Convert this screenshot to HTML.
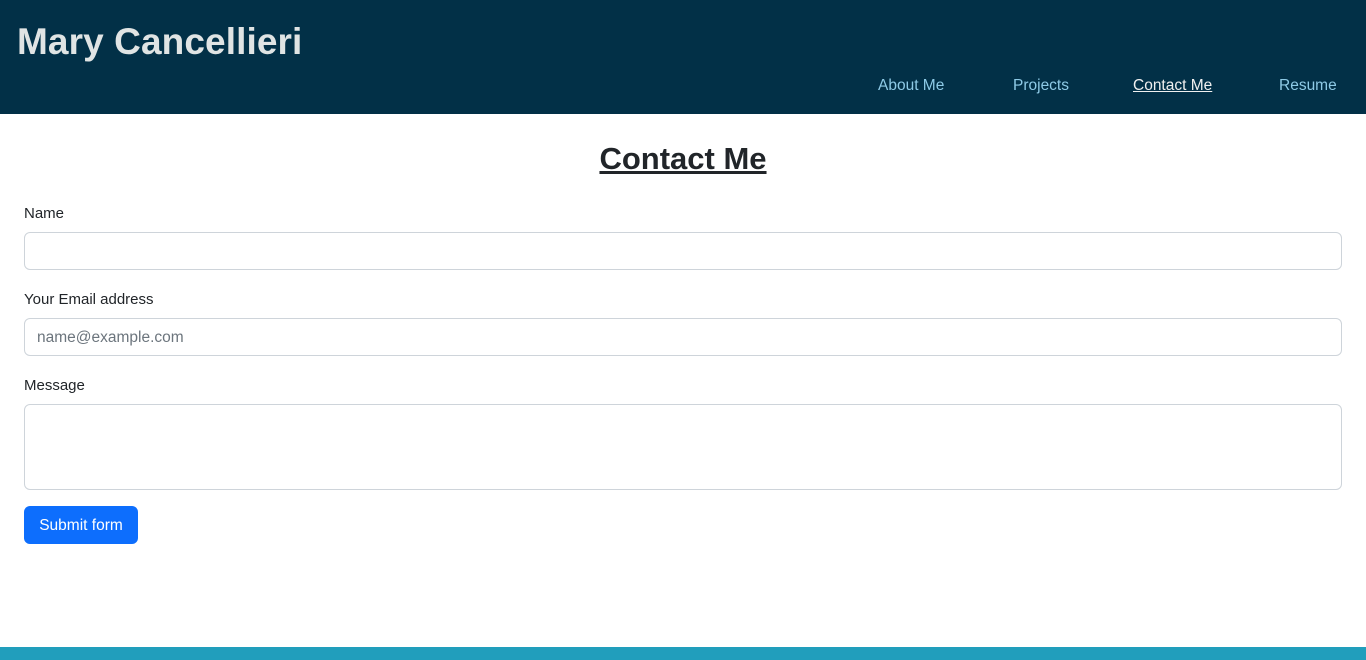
<!DOCTYPE html>
<html><head><style>
*{box-sizing:border-box;margin:0;padding:0}
body{width:1366px;height:660px;overflow:hidden;background:#fff;font-family:"Liberation Sans",sans-serif;color:#212529;position:relative}
header{height:114px;background:#023047;position:relative}
h1{position:absolute;left:17px;top:21px;font-size:37px;font-weight:600;color:#e0e4e4;letter-spacing:0.1px}
nav a{position:absolute;top:77px;font-size:15.5px;color:#8ecae6;text-decoration:none}
nav a.cur{color:#f0f0f0;text-decoration:underline}
h2{position:absolute;left:0;width:1366px;top:141px;text-align:center;font-size:31px;font-weight:600;text-decoration:underline;color:#212529}
label{position:absolute;left:24px;font-size:15px}
.in{position:absolute;left:24px;width:1318px;border:1px solid #ced4da;border-radius:6px;background:#fff}
.ph{color:#6c757d;font-size:15.5px;padding:10px 12px}
.btn{position:absolute;left:24px;top:506px;width:114px;height:38px;background:#0d6efd;color:#fff;border-radius:6px;font-size:15.5px;line-height:40px;text-align:center}
.foot{position:absolute;left:0;top:647px;width:1366px;height:13px;background:#219ebc}
</style></head><body>
<header><h1>Mary Cancellieri</h1>
<nav><a style="left:878px">About Me</a><a style="left:1013px">Projects</a><a class="cur" style="left:1133px">Contact Me</a><a style="left:1279px">Resume</a></nav></header>
<h2>Contact Me</h2>
<label style="top:205px">Name</label>
<div class="in" style="top:232px;height:38px"></div>
<label style="top:291px">Your Email address</label>
<div class="in ph" style="top:318px;height:38px">name@example.com</div>
<label style="top:377px">Message</label>
<div class="in" style="top:404px;height:86px"></div>
<div class="btn">Submit form</div>
<div class="foot"></div>
</body></html>
